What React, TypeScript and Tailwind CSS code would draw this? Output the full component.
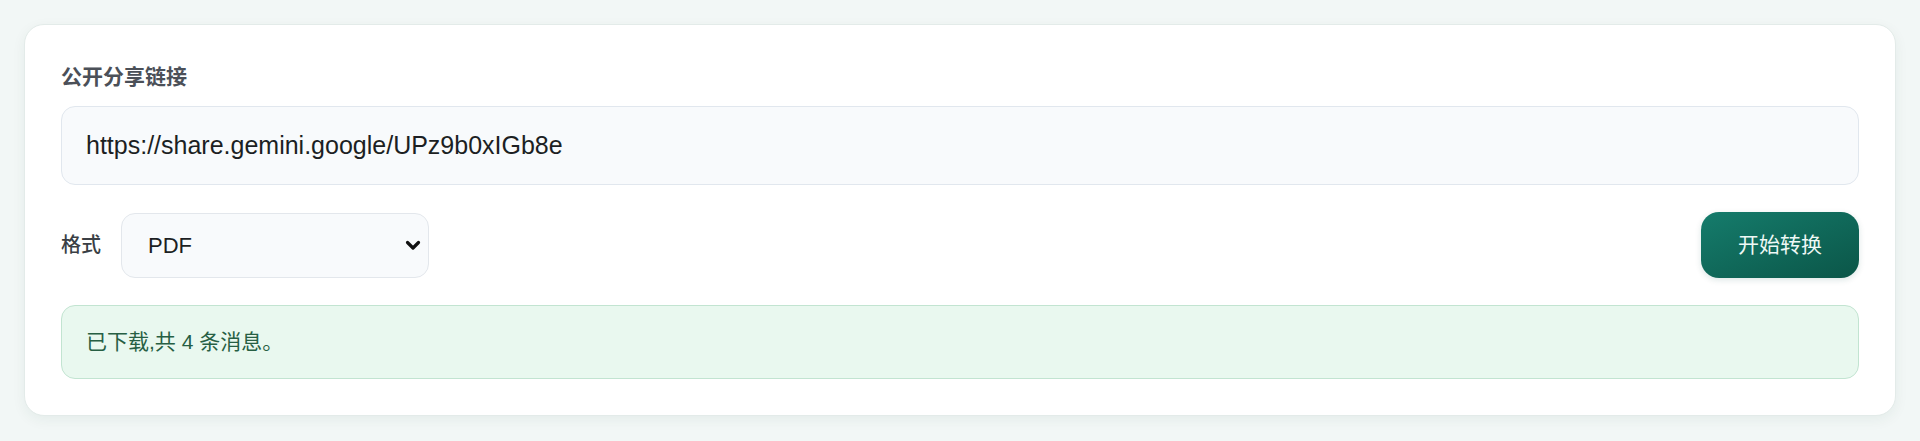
import React, { useState } from "react";

const FONT = "font-['Liberation_Sans','Noto_Sans_CJK_SC',sans-serif]";

const formats = ["PDF", "Markdown", "HTML", "JSON"];

const ChevronDown = () => (
	<svg width="16" height="12" viewBox="0 0 16 12" className="pointer-events-none absolute right-[8px] top-1/2 -translate-y-1/2">
		<path d="M2.5 3.5 L8 9 L13.5 3.5" fill="none" stroke="#111" strokeWidth="3.2" strokeLinecap="round" strokeLinejoin="round" />
	</svg>
);

export default function App() {
	const [url, setUrl] = useState("https://share.gemini.google/UPz9b0xIGb8e");
	const [format, setFormat] = useState("PDF");

	return (
		<div className={`min-h-[441px] bg-[#f2f7f6] p-[24px] ${FONT}`}>
			<div className="rounded-[20px] border border-[#e3ebe9] bg-white p-[36px] shadow-[0_4px_14px_rgba(15,60,50,0.06)]">
				{/* share link */}
				<label className="mb-[13px] block text-[21px] leading-[32px] font-semibold text-[#4b5058]">公开分享链接</label>
				<input
					value={url}
					onChange={(e) => setUrl(e.target.value)}
					className="block h-[79px] w-full rounded-[14px] border border-[#e1e7ee] bg-[#f8fafc] px-[24px] text-[25px] text-[#1c1f23] outline-none"
				/>

				{/* format + action */}
				<div className="mt-[27px] flex h-[66px] items-center">
					<span className="mr-[20px] text-[20px] font-medium text-[#3a3f45]">格式</span>
					<div className="relative">
						<select
							value={format}
							onChange={(e) => setFormat(e.target.value)}
							className="h-[65px] w-[308px] appearance-none rounded-[14px] border border-[#e3e7ec] bg-[#f8fafc] pl-[26px] text-[22px] text-[#1c1f23] outline-none"
						>
							{formats.map((f) => (
								<option key={f}>{f}</option>
							))}
						</select>
						<ChevronDown />
					</div>
					<button className="ml-auto h-[66px] w-[158px] rounded-[18px] bg-gradient-to-br from-[#157c6c] to-[#0b5648] text-[21px] text-[#eef8f5] shadow-[0_2px_6px_rgba(10,80,70,0.14)]">
						开始转换
					</button>
				</div>

				{/* status */}
				<div className="mt-[27px] flex h-[74px] items-center rounded-[14px] border border-[#c2e4d1] bg-[#e9f8ef] px-[24px] text-[21px] text-[#275f44]">
					已下载,共 4 条消息。
				</div>
			</div>
		</div>
	);
}
